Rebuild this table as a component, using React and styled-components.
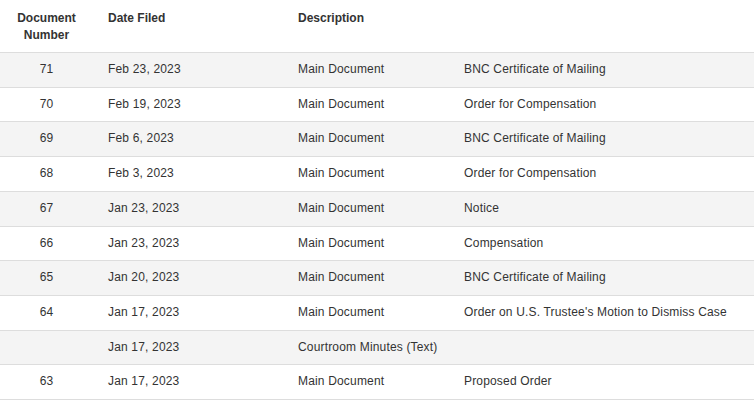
import React from "react";
import styled, { createGlobalStyle } from "styled-components";

const Global = createGlobalStyle`
  html, body { margin: 0; padding: 0; background: #fff; }
  body { font-family: "Liberation Sans", Arial, sans-serif; }
`;

const Table = styled.table`
  width: 754px;
  border-collapse: collapse;
  table-layout: fixed;
  font-family: "Liberation Sans", Arial, sans-serif;
  font-size: 12px;
  color: #333;
`;

const Th = styled.th`
  text-align: ${(p) => (p.$center ? "center" : "left")};
  vertical-align: top;
  font-weight: bold;
  padding: 10px 15px 8px;
  line-height: 17px;
  border-bottom: 1px solid #ddd;
`;

const Row = styled.tr`
  background: ${(p) => (p.$striped ? "#f4f4f4" : "#fff")};
`;

const Td = styled.td`
  text-align: ${(p) => (p.$center ? "center" : "left")};
  vertical-align: top;
  padding: 8px 15px;
  line-height: 17.7px;
  letter-spacing: 0.17px;
  border-bottom: 1px solid #ddd;
  white-space: nowrap;
`;

const rows = [
  ["71", "Feb 23, 2023", "Main Document", "BNC Certificate of Mailing"],
  ["70", "Feb 19, 2023", "Main Document", "Order for Compensation"],
  ["69", "Feb 6, 2023", "Main Document", "BNC Certificate of Mailing"],
  ["68", "Feb 3, 2023", "Main Document", "Order for Compensation"],
  ["67", "Jan 23, 2023", "Main Document", "Notice"],
  ["66", "Jan 23, 2023", "Main Document", "Compensation"],
  ["65", "Jan 20, 2023", "Main Document", "BNC Certificate of Mailing"],
  ["64", "Jan 17, 2023", "Main Document", "Order on U.S. Trustee's Motion to Dismiss Case"],
  ["", "Jan 17, 2023", "Courtroom Minutes (Text)", ""],
  ["63", "Jan 17, 2023", "Main Document", "Proposed Order"],
];

export default function App() {
  return (
    <>
      <Global />
      <Table>
        <colgroup>
          <col style={{ width: 93 }} />
          <col style={{ width: 190 }} />
          <col style={{ width: 166 }} />
          <col />
        </colgroup>
        <thead>
          <tr>
            <Th $center>Document Number</Th>
            <Th>Date Filed</Th>
            <Th>Description</Th>
            <Th></Th>
          </tr>
        </thead>
        <tbody>
          {rows.map((r, i) => (
            <Row key={i} $striped={i % 2 === 0}>
              <Td $center>{r[0]}</Td>
              <Td>{r[1]}</Td>
              <Td>{r[2]}</Td>
              <Td>{r[3]}</Td>
            </Row>
          ))}
        </tbody>
      </Table>
    </>
  );
}
